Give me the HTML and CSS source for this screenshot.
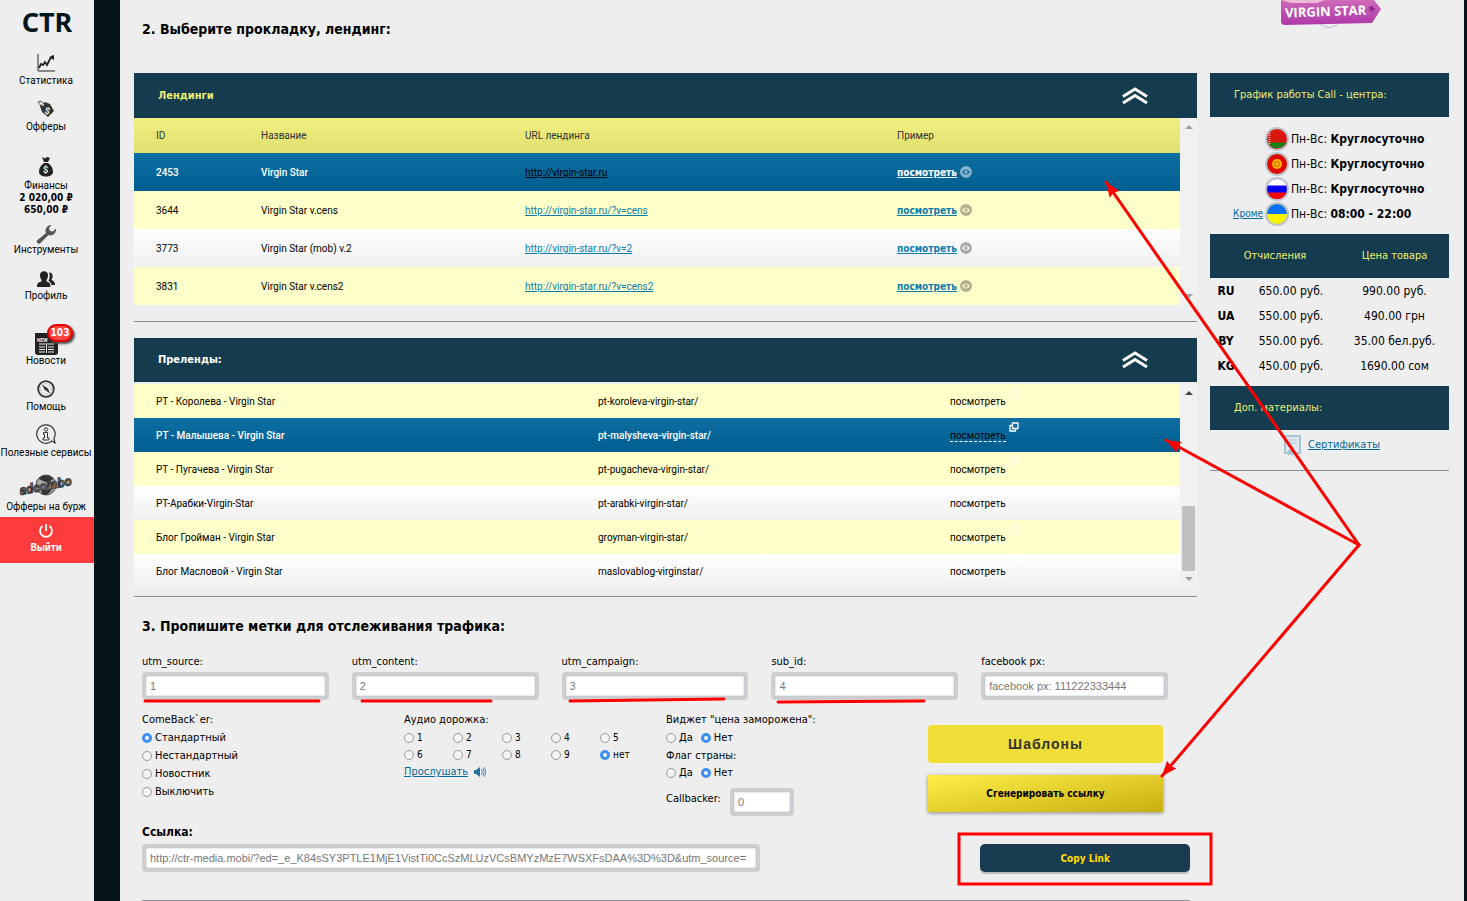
FILE: index.html
```html
<!DOCTYPE html>
<html lang="ru">
<head>
    <meta charset="utf-8">
    <title>CTR - Virgin Star</title>
    <meta name="viewport" content="width=device-width, initial-scale=1.0">
    <link rel="stylesheet" href="styles.css">
</head>

<body>
<!--shared icons-->
<svg class="sprite" width="0" height="0">
    <symbol id="eye" viewBox="0 0 12 12">
        <path fill-rule="evenodd" d="M6 0a6 6 0 1 1 0 12a6 6 0 1 1 0-12zM2 6q4-5 8 0q-4 5-8 0zM6 4.200a1.800 1.800 0 1 0 0 3.600a1.800 1.800 0 1 0 0-3.600z"/>
        <circle cx="6" cy="6" r="1"/>
    </symbol>
    <symbol id="up" viewBox="0 0 28 18">
        <path d="M2 9.500L14 2l12 7.500M2 16l12-7.500L26 16" fill="none" stroke="#fff" stroke-width="3"/>
    </symbol>
    <symbol id="window" viewBox="0 0 10 10">
        <path d="M3.500 1h5.500v5.500h-5.500zM3 3.500h-2v5.500h5.500v-2" fill="none" stroke="#fff" stroke-width="1.300"/>
    </symbol>
</svg>

<div id="container">
    <nav id="sidebar">
        <a href="#" class="logo">CTR</a>
        <a href="#" class="item">
            <svg width="18" height="18" viewBox="0 0 18 18" fill="none" stroke="#222"><path d="M1 0v17h17"/><path d="M2 14l2-4 2 1 2-3 2 3 3-6 3-3" stroke-width="1.800"/><path d="M12 3l5-2v5z" fill="#222" stroke="none"/></svg>
            <span>Статистика</span>
        </a>
        <a href="#" class="item">
            <svg width="18" height="18" viewBox="0 0 18 18"><path d="M1 2l3-1 2 2M1 2l3 4" fill="none" stroke="#555"/><path d="M3 6l5-4 5 2 4 7-6 6-6-5z" fill="#333"/><circle cx="6" cy="5" r="1" fill="#eee"/><text x="8" y="14" font-size="9" class="money" transform="rotate(15 10 10)">$</text></svg>
            <span>Офферы</span>
        </a>
        <a href="#" class="item finance">
            <svg width="16" height="20" viewBox="0 0 16 20"><path d="M4 0l3 1.500L9 0l3 1-2 4H6zM6 6h4c3 2 5 5 5 8.500 0 3.500-3 5-7 5s-7-1.500-7-5C1 11 3 8 6 6z" fill="#222"/><text x="5" y="16" font-size="9" class="money">$</text></svg>
            <span>Финансы</span>
        </a>
        <div class="balance">2 020,00 ₽<br>650,00 ₽</div>
        <a href="#" class="item tools">
            <svg width="20" height="20" viewBox="0 0 20 20"><path d="M1 16.500L10 9c-1.500-4 1-8 5.500-8L13 4l1 3 3 .500 3-3c.500 4.500-3 7.500-7.500 6.500L4 19.500c-2 1-4-1-3-3z" fill="#555"/></svg>
            <span>Инструменты</span>
        </a>
        <a href="#" class="item">
            <svg width="18" height="16" viewBox="0 0 18 16" fill="#222"><path d="M3 4c0-5 8-5 8 0 0 3-1 4-1.500 5v1.500c3 .700 4 2 4 5.500H0c0-3.500 1-4.800 4.500-5.500V9C4 8 3 7 3 4z"/><path d="M12 1.500c3-.500 5 3 2.500 7.500 2.500 1 3.500 2.500 3.500 5h-3.500c-.500-2-1.500-3.500-3-4 1.500-3 1.500-5.500.500-8.500z"/></svg>
            <span>Профиль</span>
        </a>
        <a href="#" class="item news">
            <svg width="23" height="22" viewBox="0 0 23 22"><path d="M0 0h23v19a3 3 0 0 1-3 3H3a3 3 0 0 1-3-3z" fill="#222"/><text x="2" y="9" font-size="5" class="money">NEW</text><path d="M4 11h15M4 14h6M4 16.500h6M4 19h6M13 14h6M13 16.500h6M13 19h6M11.500 12v8" stroke="#eee" fill="none"/></svg>
            <b class="badge">103</b>
            <span>Новости</span>
        </a>
        <a href="#" class="item">
            <svg width="18" height="18" viewBox="0 0 18 18"><circle cx="9" cy="9" r="7.800" fill="none" stroke="#333" stroke-width="1.800"/><circle cx="9" cy="9" r="5.500" fill="none" stroke="#888" stroke-dasharray="1 2"/><path d="M5 4.500l6 4 2 5-5.500-4z" fill="#333"/></svg>
            <span>Помощь</span>
        </a>
        <a href="#" class="item">
            <svg width="20" height="20" viewBox="0 0 20 20" fill="none" stroke="#333"><path d="M16 17a9.200 9.200 0 1 1 2-2.500l1 4.500z" stroke-width="1.200"/><circle cx="10" cy="5.500" r="1.700"/><path d="M7.500 8.500h4v5.500h1.500v2h-6v-2h1.500v-3.500h-1z"/></svg>
            <span>Полезные сервисы</span>
        </a>
        <a href="#" class="item adcombo">
            <svg width="60" height="26" viewBox="0 0 60 26"><circle cx="30" cy="13" r="10" fill="#aaa" stroke="#444"/><path d="M23 7c4-5 11-4 14 0l-5 4-5-2zM25 18l7 0 4-2c-1 5-6 8-10 6z" fill="#333"/><text x="3" y="18" class="brand" transform="rotate(-11 30 13)">adcombo</text></svg>
            <span>Офферы на бурж</span>
        </a>
        <a href="#" class="item logout">
            <svg width="16" height="16" viewBox="0 0 16 16" fill="none" stroke="#fff" stroke-width="1.800"><path d="M4.500 3a6 6 0 1 0 7 0M8 1v7"/></svg>
            <span>Выйти</span>
        </a>
    </nav>

    <div id="content">
        <main>
            <h2>2. Выберите прокладку, лендинг:</h2>

            <section class="panel landings">
                <div class="head"><h3>Лендинги</h3><button type="button" class="toggle" aria-label="Свернуть"><svg width="28" height="18"><use href="#up"/></svg></button></div>
                <div class="scroll">
                    <table>
                        <colgroup><col class="c-id"><col class="c-name"><col class="c-url"><col></colgroup>
                        <thead>
                            <tr><th>ID</th><th>Название</th><th>URL лендинга</th><th>Пример</th></tr>
                        </thead>
                        <tbody>
                            <tr class="selected"><td>2453</td><td>Virgin Star</td><td><a href="#">http://virgin-star.ru</a></td><td><a href="#" class="view">посмотреть</a><svg class="eye" width="12" height="12"><use href="#eye"/></svg></td></tr>
                            <tr class="odd"><td>3644</td><td>Virgin Star v.cens</td><td><a href="#">http://virgin-star.ru/?v=cens</a></td><td><a href="#" class="view">посмотреть</a><svg class="eye" width="12" height="12"><use href="#eye"/></svg></td></tr>
                            <tr><td>3773</td><td>Virgin Star (mob) v.2</td><td><a href="#">http://virgin-star.ru/?v=2</a></td><td><a href="#" class="view">посмотреть</a><svg class="eye" width="12" height="12"><use href="#eye"/></svg></td></tr>
                            <tr class="odd"><td>3831</td><td>Virgin Star v.cens2</td><td><a href="#">http://virgin-star.ru/?v=cens2</a></td><td><a href="#" class="view">посмотреть</a><svg class="eye" width="12" height="12"><use href="#eye"/></svg></td></tr>
                        </tbody>
                    </table>
                    <div class="bar disabled"><i class="arrow-up"></i><i class="arrow-down"></i></div>
                </div>
            </section>

            <section class="panel prelands">
                <div class="head"><h3>Преленды:</h3><button type="button" class="toggle" aria-label="Свернуть"><svg width="28" height="18"><use href="#up"/></svg></button></div>
                <div class="scroll">
                    <table>
                        <colgroup><col class="c-title"><col class="c-path"><col></colgroup>
                        <tbody>
                            <tr class="odd"><td>РТ - Королева - Virgin Star</td><td>pt-koroleva-virgin-star/</td><td><a href="#" class="open">посмотреть<svg width="10" height="10"><use href="#window"/></svg></a></td></tr>
                            <tr class="selected"><td>РТ - Малышева - Virgin Star</td><td>pt-malysheva-virgin-star/</td><td><a href="#" class="open">посмотреть<svg width="10" height="10"><use href="#window"/></svg></a></td></tr>
                            <tr class="odd"><td>РТ - Пугачева - Virgin Star</td><td>pt-pugacheva-virgin-star/</td><td><a href="#" class="open">посмотреть<svg width="10" height="10"><use href="#window"/></svg></a></td></tr>
                            <tr><td>РТ-Арабки-Virgin-Star</td><td>pt-arabki-virgin-star/</td><td><a href="#" class="open">посмотреть<svg width="10" height="10"><use href="#window"/></svg></a></td></tr>
                            <tr class="odd"><td>Блог Гройман - Virgin Star</td><td>groyman-virgin-star/</td><td><a href="#" class="open">посмотреть<svg width="10" height="10"><use href="#window"/></svg></a></td></tr>
                            <tr><td>Блог Масловой - Virgin Star</td><td>maslovablog-virginstar/</td><td><a href="#" class="open">посмотреть<svg width="10" height="10"><use href="#window"/></svg></a></td></tr>
                        </tbody>
                    </table>
                    <div class="bar"><i class="arrow-up"></i><i class="thumb"></i><i class="arrow-down"></i></div>
                </div>
            </section>

            <form id="tags">
                <h2>3. Пропишите метки для отслеживания трафика:</h2>
                <div class="fields">
                    <div><label for="utm_source">utm_source:</label><input type="text" id="utm_source" placeholder="1"></div>
                    <div><label for="utm_content">utm_content:</label><input type="text" id="utm_content" placeholder="2"></div>
                    <div><label for="utm_campaign">utm_campaign:</label><input type="text" id="utm_campaign" placeholder="3"></div>
                    <div><label for="sub_id">sub_id:</label><input type="text" id="sub_id" placeholder="4"></div>
                    <div><label for="facebook">facebook px:</label><input type="text" id="facebook" placeholder="facebook px: 111222333444"></div>
                </div>

                <div class="options">
                    <div>
                        <p>ComeBack`er:</p>
                        <label class="radio"><input type="radio" name="comeback" checked>Стандартный</label>
                        <label class="radio"><input type="radio" name="comeback">Нестандартный</label>
                        <label class="radio"><input type="radio" name="comeback">Новостник</label>
                        <label class="radio"><input type="radio" name="comeback">Выключить</label>
                    </div>
                    <div>
                        <p>Аудио дорожка:</p>
                        <div class="tracks">
                            <label class="radio"><input type="radio" name="audio">1</label>
                            <label class="radio"><input type="radio" name="audio">2</label>
                            <label class="radio"><input type="radio" name="audio">3</label>
                            <label class="radio"><input type="radio" name="audio">4</label>
                            <label class="radio"><input type="radio" name="audio">5</label>
                            <label class="radio"><input type="radio" name="audio">6</label>
                            <label class="radio"><input type="radio" name="audio">7</label>
                            <label class="radio"><input type="radio" name="audio">8</label>
                            <label class="radio"><input type="radio" name="audio">9</label>
                            <label class="radio"><input type="radio" name="audio" checked>нет</label>
                        </div>
                        <a href="#" class="listen">Прослушать<svg width="12" height="10" viewBox="0 0 12 10"><path d="M0 3h2l4-3v10L2 7H0z" fill="#2a6f9e"/><path d="M7.500 2q1.500 3 0 6M9 1q2.500 4 0 8M10.500 0q2.500 5 0 10" fill="none" stroke="#5e93b8"/></svg></a>
                    </div>
                    <div>
                        <p>Виджет "цена заморожена":</p>
                        <div class="yesno">
                            <label class="radio"><input type="radio" name="widget">Да</label>
                            <label class="radio"><input type="radio" name="widget" checked>Нет</label>
                        </div>
                        <p>Флаг страны:</p>
                        <div class="yesno">
                            <label class="radio"><input type="radio" name="flag">Да</label>
                            <label class="radio"><input type="radio" name="flag" checked>Нет</label>
                        </div>
                        <div class="callback"><label for="callbacker">Callbacker:</label><input type="text" id="callbacker" placeholder="0"></div>
                    </div>
                    <div class="buttons">
                        <button type="button" class="templates">Шаблоны</button>
                        <button type="button" class="generate">Сгенерировать ссылку</button>
                    </div>
                </div>

                <label for="link" class="link-label">Ссылка:</label>
                <div class="link">
                    <input type="text" id="link" placeholder="http://ctr-media.mobi/?ed=_e_K84sSY3PTLE1MjE1VistTi0CcSzMLUzVCsBMYzMzE7WSXFsDAA%3D%3D&amp;utm_source=" readonly>
                    <button type="button" class="copy">Copy Link</button>
                </div>
            </form>
        </main>

        <aside>
            <div class="product">
                <svg width="104" height="30" viewBox="0 0 104 30">
                    <defs><linearGradient id="pink" x2="0" y2="1"><stop offset="0" stop-color="#cf6ab8"/><stop offset="1" stop-color="#ac38a8"/></linearGradient></defs>
                    <path d="M40 23q10 9 20 0" fill="#eee" stroke="#c3b8dc"/>
                    <path d="M2 0h93l7 9-9 14-87 2q-4 0-4-4z" fill="url(#pink)"/>
                    <path d="M2 0h44l-8 3H12z" fill="#f0b9d4"/>
                    <path d="M93 5l1 2.500 3 .500-2.500 1.500.500 3-2-2-3 1.500 1-3-2-2 3 0z" fill="#8c2a93"/>
                    <text x="6" y="16" transform="rotate(-2 50 12)">VIRGIN STAR</text>
                </svg>
            </div>
            <div class="side-head">График работы Call - центра:</div>
            <ul class="hours">
                <li><span></span><svg width="24" height="24" viewBox="0 0 24 24"><circle cx="12" cy="12" r="12" fill="#bcc5cb"/><circle cx="12" cy="12" r="10" fill="#d8180c"/><path d="M3 15.500h18a10 10 0 0 1-18 0z" fill="#178217"/><path d="M4.500 6v11" stroke="#f3b0a8" stroke-width="2" stroke-dasharray="1 1"/></svg><div>Пн-Вс: <b>Круглосуточно</b></div></li>
                <li><span></span><svg width="24" height="24" viewBox="0 0 24 24"><circle cx="12" cy="12" r="12" fill="#bcc5cb"/><circle cx="12" cy="12" r="10" fill="#df0a00"/><circle cx="12" cy="12" r="5" fill="#f8b400"/><circle cx="12" cy="12" r="2.500" fill="none" stroke="#df5a00"/></svg><div>Пн-Вс: <b>Круглосуточно</b></div></li>
                <li><span></span><svg width="24" height="24" viewBox="0 0 24 24"><circle cx="12" cy="12" r="12" fill="#bcc5cb"/><circle cx="12" cy="12" r="10" fill="#0a00f0"/><path d="M2.600 8.500a10 10 0 0 1 18.800 0z" fill="#fff"/><path d="M2.600 15.500a10 10 0 0 0 18.800 0z" fill="#f00"/></svg><div>Пн-Вс: <b>Круглосуточно</b></div></li>
                <li><a href="#">Кроме</a><svg width="24" height="24" viewBox="0 0 24 24"><circle cx="12" cy="12" r="12" fill="#bcc5cb"/><circle cx="12" cy="12" r="10" fill="#f8f400"/><path d="M2 12a10 10 0 0 1 20 0z" fill="#0a70f8"/></svg><div>Пн-Вс: <b>08:00 - 22:00</b></div></li>
            </ul>
            <table class="rates">
                <colgroup><col class="c-code"><col class="c-pay"><col></colgroup>
                <thead><tr><th colspan="2">Отчисления</th><th>Цена товара</th></tr></thead>
                <tbody>
                    <tr><td>RU</td><td>650.00 руб.</td><td>990.00 руб.</td></tr>
                    <tr><td>UA</td><td>550.00 руб.</td><td>490.00 грн</td></tr>
                    <tr><td>BY</td><td>550.00 руб.</td><td>35.00 бел.руб.</td></tr>
                    <tr><td>KG</td><td>450.00 руб.</td><td>1690.00 сом</td></tr>
                </tbody>
            </table>
            <div class="side-head">Доп. материалы:</div>
            <div class="certs">
                <svg width="17" height="21" viewBox="0 0 17 21"><path d="M1 1h15v17H1z" fill="#e0eaee" stroke="#a8c4cf" stroke-width="2"/><path d="M4 5h9M4 8h9M4 11h5" stroke="#a8c4cf"/><path d="M4 15h5v6l-2.500-2L4 21z" fill="#a8c4cf"/></svg>
                <a href="#">Сертификаты</a>
            </div>
        </aside>
    </div>
</div>

<!--red marks over the page-->
<svg id="marks" width="1467" height="901" viewBox="0 0 1467 901">
    <defs>
        <marker id="tip" markerUnits="userSpaceOnUse" markerWidth="16" markerHeight="12" refX="15" refY="6" orient="auto"><path d="M0 0l15 6-15 6 2-6z" fill="#f00"/></marker>
    </defs>
    <path d="M1359 545L1106 182" marker-end="url(#tip)"/>
    <path d="M1359 545L1166 440" marker-end="url(#tip)"/>
    <path d="M1359 545L1162 776" marker-end="url(#tip)"/>
    <path d="M145 701h174M362 701h129M570 701l154-2M778 702l146-1"/>
    <path d="M959 834h252v50h-252z"/>
</svg>
</body>
</html>
```
FILE: styles.css
```css
* {
    box-sizing: border-box;
}
body {
    margin: 0;
    background: #eee;
    color: #000;
    font-family: Tahoma, "DejaVu Sans Condensed", "DejaVu Sans", sans-serif;
    font-size: 11px;
    line-height: 18px;
}
a {
    color: #05699b;
}
h2, h3, p, ul {
    margin: 0;
    padding: 0;
}
button, input {
    font-family: inherit;
}
.sprite {
    position: absolute;
}
#container {
    display: flex;
    min-height: 100vh;
}

/* sidebar */
#sidebar {
    width: 94px;
    flex: none;
    font-family: Tahoma, Roboto, sans-serif;
    text-align: center;
}
.logo {
    display: block;
    height: 41px;
    color: #04161b;
    font-family: "Noto Sans", sans-serif;
    font-size: 27px;
    font-weight: bold;
    line-height: 43px;
    text-decoration: none;
}
.item {
    display: flex;
    position: relative;
    flex-direction: column;
    align-items: center;
    justify-content: flex-end;
    height: 46px;
    padding-right: 2px;
    color: #000;
    font-size: 10px;
    line-height: 12px;
    text-decoration: none;
    white-space: nowrap;
}
.item svg {
    margin-bottom: 3px;
}
.finance {
    height: 59px;
}
.tools {
    height: 40px;
}
.tools svg, .news svg {
    margin-bottom: 0;
}
.news {
    height: 65px;
}
.adcombo {
    height: 54px;
}
.balance {
    padding-right: 2px;
    font-family: Tahoma, "DejaVu Sans Condensed", sans-serif;
    font-size: 10px;
    font-weight: bold;
    line-height: 12px;
}
.badge {
    position: absolute;
    top: 22px;
    left: 47px;
    width: 26px;
    height: 18px;
    border: 2px solid #d00;
    border-radius: 9px;
    background: #f44;
    box-shadow: 2px 2px 2px #555;
    color: #fff;
    font-family: Tahoma, "DejaVu Sans Condensed", sans-serif;
    font-size: 10px;
    line-height: 14px;
}
.logout {
    margin-top: 4px;
    padding-bottom: 9px;
    background: #ff3c3c;
    color: #fff;
    font-weight: bold;
}
.money {
    fill: #eee;
    font-weight: bold;
}
.brand {
    fill: #999;
    stroke: #333;
    font-size: 13px;
    font-style: italic;
    font-weight: bold;
}

#content {
    display: flex;
    flex: 1;
    gap: 13px;
    padding: 0 15px 0 14px;
    border-left: 26px solid #041318;
    border-right: 3px solid #041318;
}
main {
    flex: 1;
    min-width: 0;
}
h2 {
    padding-left: 8px;
    font-size: 14px;
    line-height: 20px;
}
main > h2 {
    padding-top: 19px;
    height: 73px;
}

/* tables */
.panel {
    margin-bottom: 16px;
    padding-bottom: 16px;
    border-bottom: 1px solid #8c8c9c;
}
.prelands {
    padding-bottom: 8px;
}
.head {
    display: flex;
    align-items: center;
    justify-content: space-between;
    height: 44px;
    padding: 0 48px 0 24px;
    background: #143c4e;
    color: #fff;
}
.landings .head {
    height: 45px;
    color: #ecec74;
}
.prelands .head {
    margin-bottom: 2px;
}
h3 {
    font-size: 11px;
}
.toggle {
    height: 18px;
    padding: 0;
    border: 0;
    background: none;
    cursor: pointer;
}
.scroll {
    display: flex;
}
table {
    width: 100%;
    border-collapse: collapse;
    table-layout: fixed;
}
.panel table {
    flex: 1;
    font-family: Tahoma, Roboto, sans-serif;
    font-size: 10px;
}
.c-id {width: 105px;}
.c-name {width: 264px;}
.c-url {width: 372px;}
.c-title {width: 442px;}
.c-path {width: 352px;}
.panel th, .panel td {
    padding: 0 0 0 22px;
    text-align: left;
}
.panel th {
    height: 35px;
    color: #333;
    font-weight: normal;
}
.panel thead tr {
    background: linear-gradient(#f0f082, #e0e070);
}
.panel td {
    height: 38px;
    padding-top: 2px;
}
.prelands td {
    height: 34px;
}
.panel tbody tr {
    background: linear-gradient(#fff, #f0f0f0);
}
.panel tbody .odd {
    background: #ffffca;
}
.panel tbody .selected {
    background: linear-gradient(#0e6fa2, #005e90);
    color: #fff;
    font-weight: 500;
}
.panel td a {
    color: #0a7cae;
}
.panel .selected a {
    color: #000;
    font-weight: normal;
}
.panel .view, .panel .selected .view {
    font-family: Tahoma, "DejaVu Sans Condensed", sans-serif;
    font-weight: bold;
}
.panel .selected .view {
    color: #fff;
}
.eye {
    margin: -2px 0 0 3px;
    vertical-align: middle;
    fill: #000;
    opacity: 0.3;
}
.selected .eye {
    fill: #fff;
    opacity: 0.5;
}
.panel .open {
    position: relative;
    border-bottom: 1px dashed #fff;
    color: #000;
    text-decoration: none;
}
.open svg {
    position: absolute;
    top: -8px;
    right: -13px;
    opacity: 0.5;
}
.selected .open svg {
    opacity: 1;
}
.bar {
    display: flex;
    flex-direction: column;
    align-items: center;
    width: 17px;
    padding: 7px 0;
    background: #f1f1f1;
}
.arrow-up, .arrow-down {
    border: 4px solid transparent;
}
.arrow-up {
    margin-top: -4px;
    border-bottom-color: #444;
}
.arrow-down {
    margin: auto 0 -4px;
    border-top-color: #a0a0a0;
}
.disabled .arrow-up {
    border-bottom-color: #a0a0a0;
}
.thumb {
    width: 13px;
    height: 65px;
    margin: auto 0 6px;
    background: #c1c1c1;
}
.thumb + .arrow-down {
    margin-top: 0;
}

/* form */
#tags {
    margin-right: 7px;
    padding-left: 8px;
}
#tags h2 {
    padding: 3px 0 0;
}
input[type=text] {
    display: block;
    width: 100%;
    height: 28px;
    padding: 0 5px;
    border: 3px solid #cfcfcf;
    border-radius: 4px;
    background: #fff;
    box-shadow: inset 0 0 2px 1px #b4b8c4;
    font-family: Arial, "Liberation Sans", sans-serif;
    font-size: 11px;
}
input::placeholder {
    color: #777;
}
.fields {
    display: grid;
    grid-template-columns: repeat(5, 1fr);
    gap: 23px;
    margin: 17px 22px 0 0;
}
.fields label {
    display: block;
    height: 19px;
}
.options {
    display: grid;
    grid-template-columns: repeat(4, 1fr);
    margin-top: 11px;
}
.radio {
    display: flex;
    align-items: center;
}
.radio input {
    appearance: none;
    width: 10px;
    height: 10px;
    margin: 0 3px 0 0;
    border: 1px solid #999;
    border-radius: 50%;
    background: #f4f4f4;
}
.radio input:checked {
    border: 3px solid #3b8ff0;
    background: #fff;
}
.tracks {
    display: grid;
    grid-template-columns: repeat(5, 49px);
    font-size: 10px;
    line-height: 17px;
}
.listen svg {
    margin-left: 6px;
    vertical-align: middle;
}
.yesno {
    display: flex;
    gap: 8px;
}
.yesno + p {
    line-height: 17px;
}
.callback {
    display: flex;
    gap: 9px;
    margin-top: 6px;
}
.callback label {
    line-height: 22px;
}
.callback input[type=text] {
    width: 64px;
}
.buttons {
    display: flex;
    flex-direction: column;
    gap: 12px;
    padding: 14px 27px 0 0;
}
.templates {
    height: 38px;
    border: 0;
    border-radius: 4px;
    background: #f0de38;
    color: #333;
    font-family: Arial, "Liberation Sans", sans-serif;
    font-size: 14px;
    font-weight: bold;
    letter-spacing: 1px;
}
.generate {
    height: 37px;
    border: 0;
    background: linear-gradient(170deg, #ffee4a, #c8b010);
    box-shadow: 0 1px 4px #888;
    color: #000;
    font-size: 10px;
    font-weight: bold;
}
.link-label {
    display: block;
    margin-top: 7px;
    font-size: 12px;
    font-weight: bold;
}
.link {
    display: flex;
    align-items: flex-start;
    justify-content: space-between;
    margin-top: 3px;
    padding-bottom: 28px;
    border-bottom: 1px solid #8c8c9c;
}
.link input[type=text] {
    width: 59%;
}
.copy {
    width: 20%;
    height: 28px;
    border: 0;
    border-radius: 5px;
    background: #1a3c50;
    box-shadow: 0 2px 1px #bbb;
    color: #ffdf00;
    font-size: 10px;
    font-weight: bold;
}

/* right column */
aside {
    width: 239px;
    flex: none;
    font-size: 12px;
}
.product {
    height: 73px;
    padding-left: 69px;
}
.product text {
    fill: #fff;
    font-family: "Open Sans", sans-serif;
    font-size: 13px;
    font-weight: bold;
}
.side-head, .rates th {
    height: 44px;
    padding: 0;
    background: #143c4e;
    color: #ecec74;
    font-size: 11px;
    font-weight: normal;
    line-height: 44px;
}
.side-head {
    padding-left: 24px;
}
.hours {
    margin: 9px 0 8px;
    list-style: none;
}
.hours li {
    display: grid;
    grid-template-columns: 53px 24px 1fr;
    gap: 2px;
    align-items: center;
    height: 25px;
}
.hours a {
    font-size: 10px;
    text-align: right;
}
.rates {
    margin-bottom: 8px;
    text-align: center;
}
.c-code {width: 32px;}
.c-pay {width: 98px;}
.rates td {
    height: 25px;
    padding: 0;
}
.rates td:first-child {
    font-weight: bold;
}
.certs {
    display: flex;
    align-items: center;
    justify-content: center;
    gap: 7px;
    height: 41px;
    padding: 0 0 10px 5px;
    border-bottom: 1px solid #8c8c9c;
    font-size: 11px;
}

/* marks */
#marks {
    position: absolute;
    top: 0;
    left: 0;
    fill: none;
    stroke: #f00;
    stroke-width: 3;
    stroke-linecap: round;
    pointer-events: none;
}
#marks marker {
    stroke: none;
}
```
